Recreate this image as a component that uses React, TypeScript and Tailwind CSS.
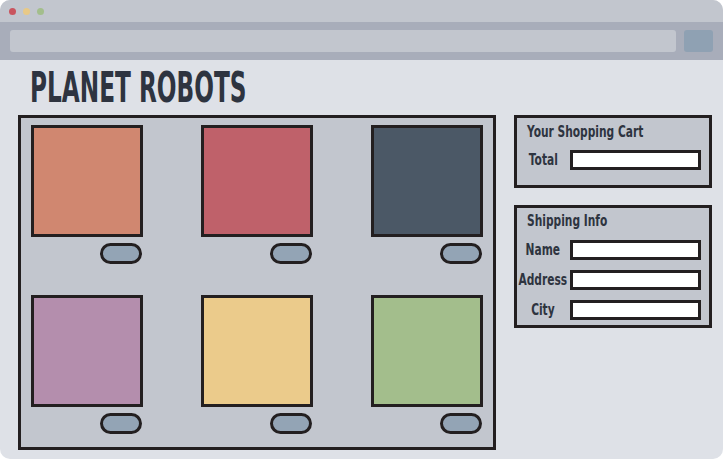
const font = { fontFamily: '"Liberation Sans Narrow", "DejaVu Sans Condensed", "Liberation Sans", sans-serif' };

const robots = ["bg-[#d08770]", "bg-[#bf616a]", "bg-[#4b5866]", "bg-[#b48ead]", "bg-[#ebcb8b]", "bg-[#a3be8c]"];

function Field({ label }: { label: string }) {
  return (
    <div className="flex h-[20px] items-center">
      <span className="flex w-[52px] shrink-0 justify-center text-[15px] font-bold whitespace-nowrap text-[#2e3440]">
        <span className="inline-block shrink-0 scale-x-[0.79]">{label}</span>
      </span>
      <div className="ml-[1px] h-[20px] w-[131px] border-[3px] border-[#231f20] bg-white" />
    </div>
  );
}

function BoxTitle({ children }: { children: string }) {
  return (
    <div className="flex h-[18px] items-center pl-[10px] text-[15px] font-bold whitespace-nowrap text-[#2e3440]">
      <span className="inline-block origin-left scale-x-[0.79]">{children}</span>
    </div>
  );
}

export default function App() {
  return (
    <div className="h-[459px] w-[723px] bg-white" style={font}>
      <div className="flex h-full flex-col overflow-hidden rounded-[10px] bg-[#dee1e7]">
        {/* window chrome */}
        <div className="flex h-[22px] items-center gap-[7px] bg-[#c2c6ce] pl-[9px]">
          <span className="h-[7px] w-[7px] rounded-full bg-[#c9555f]" />
          <span className="h-[7px] w-[7px] rounded-full bg-[#e8c987]" />
          <span className="h-[7px] w-[7px] rounded-full bg-[#a3be8c]" />
        </div>
        <div className="flex h-[38px] items-center gap-[8px] bg-[#a8adba] px-[10px]">
          <div className="h-[22px] flex-1 rounded-[3px] bg-[#c2c6ce]" />
          <div className="h-[22px] w-[29px] rounded-[3px] bg-[#8fa1b3]" />
        </div>

        {/* page */}
        <div className="pl-[18px]">
          <div className="flex h-[55px] items-center pl-[12px]">
            <h1 className="origin-left scale-x-[0.6] text-[43px] font-bold leading-none whitespace-nowrap text-[#2e3440]">
              PLANET ROBOTS
            </h1>
          </div>

          <div className="flex gap-[18px]">
            <div className="h-[335px] w-[478px] border-[3px] border-[#231f20] bg-[#c2c6ce] pt-[7px] pl-[10px]">
              <div className="grid grid-cols-[112px_112px_112px] gap-x-[58px] gap-y-[31px]">
                {robots.map((c) => (
                  <div key={c} className="flex flex-col items-end">
                    <div className={`h-[112px] w-[112px] border-[3px] border-[#231f20] ${c}`} />
                    <div className="mt-[6px] mr-[1px] h-[21px] w-[42px] rounded-full border-[3px] border-[#231f20] bg-[#93a4b5]" />
                  </div>
                ))}
              </div>
            </div>

            <div className="flex w-[198px] flex-col gap-[17px]">
              <div className="h-[73px] border-[3px] border-[#231f20] bg-[#c2c6ce] pt-[5px]">
                <BoxTitle>Your Shopping Cart</BoxTitle>
                <div className="mt-[9px]">
                  <Field label="Total" />
                </div>
              </div>

              <div className="h-[123px] border-[3px] border-[#231f20] bg-[#c2c6ce] pt-[4px]">
                <BoxTitle>Shipping Info</BoxTitle>
                <div className="mt-[10px] flex flex-col gap-[10px]">
                  <Field label="Name" />
                  <Field label="Address" />
                  <Field label="City" />
                </div>
              </div>
            </div>
          </div>
        </div>
      </div>
    </div>
  );
}
